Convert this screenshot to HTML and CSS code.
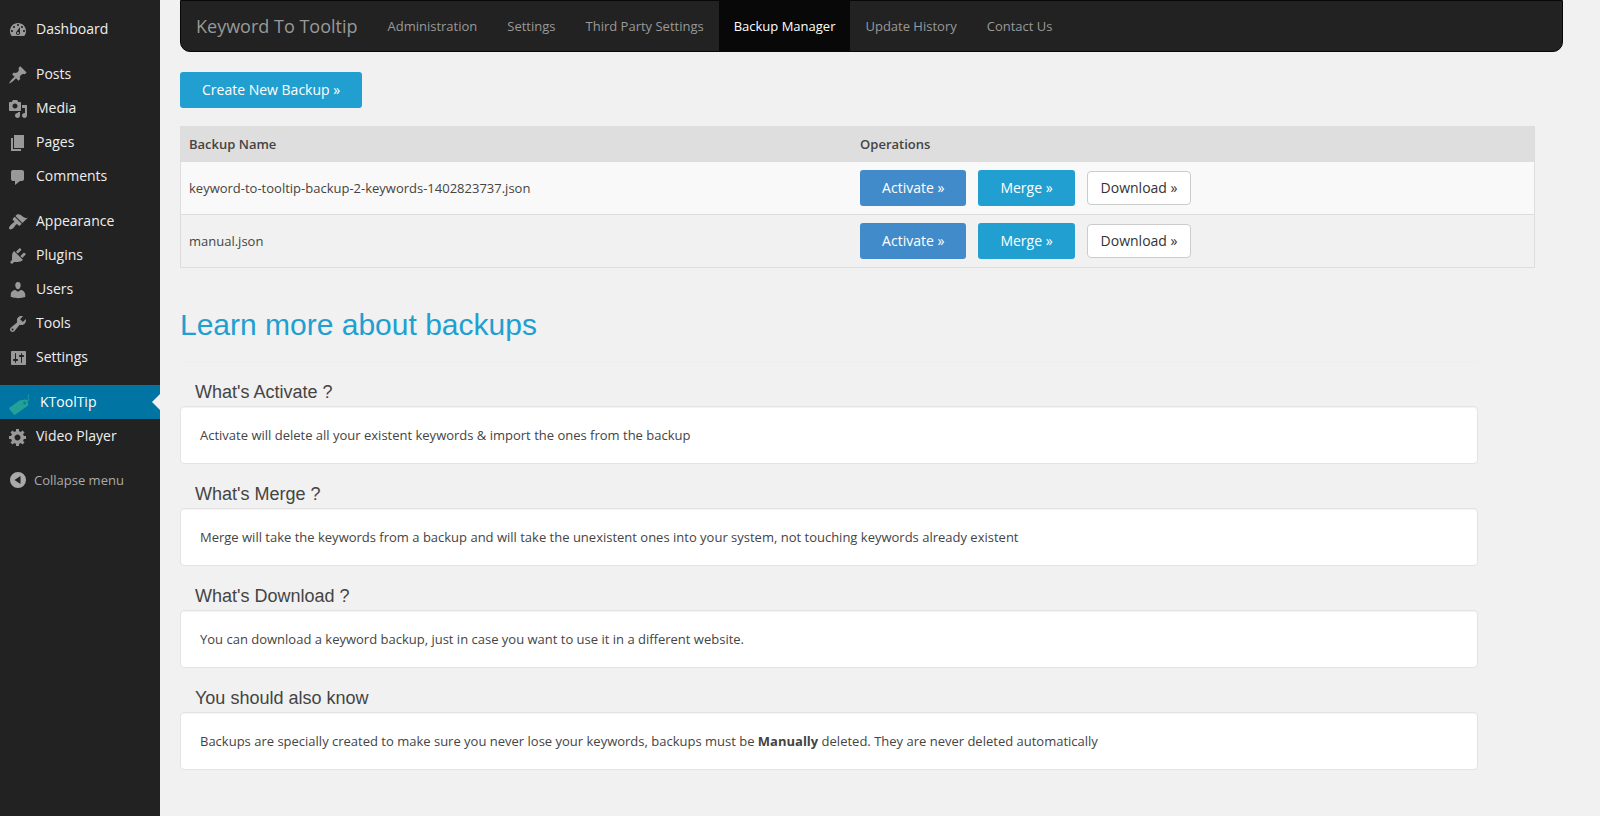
FILE: index.html
```html
<!DOCTYPE html>
<html lang="en">
<head>
<meta charset="utf-8">
<title>Backup Manager</title>
<link rel="stylesheet" href="styles.css">
</head>
<body>
<div class="layout">
  <nav class="sidebar" aria-label="Admin menu">
    <ul class="menu">
      <li><a class="menu-link" href="#"><svg class="icon" viewBox="0 0 20 20"><path fill-rule="evenodd" d="M3.76 16h12.48c1.1-1.37 1.76-3.11 1.76-5 0-4.42-3.58-8-8-8s-8 3.58-8 8c0 1.89.66 3.63 1.76 5zM10 4c.55 0 1 .45 1 1s-.45 1-1 1-1-.45-1-1 .45-1 1-1zM6 6c.55 0 1 .45 1 1s-.45 1-1 1-1-.45-1-1 .45-1 1-1zm8 0c.55 0 1 .45 1 1s-.45 1-1 1-1-.45-1-1 .45-1 1-1zm-5.37 5.55L12 7v6c0 1.1-.9 2-2 2s-2-.9-2-2c0-.57.24-1.08.63-1.45zM4 10c.55 0 1 .45 1 1s-.45 1-1 1-1-.45-1-1 .45-1 1-1zm12 0c.55 0 1 .45 1 1s-.45 1-1 1-1-.45-1-1 .45-1 1-1zm-5 3c0-.55-.45-1-1-1s-1 .45-1 1 .45 1 1 1 1-.45 1-1z"/></svg>Dashboard</a></li>
    </ul>
    <ul class="menu">
      <li><a class="menu-link" href="#"><svg class="icon" viewBox="0 0 20 20"><path d="M10.44 3.02l1.82-1.82 6.36 6.35-1.83 1.82c-1.05-.68-2.48-.57-3.41.36l-.75.75c-.92.93-1.04 2.35-.35 3.41l-1.83 1.82-2.41-2.41-2.8 2.79c-.42.42-3.38 2.71-3.8 2.29s1.86-3.39 2.28-3.81l2.79-2.79L4.1 9.36l1.83-1.82c1.05.69 2.48.57 3.4-.36l.75-.75c.93-.92 1.05-2.35.36-3.41z"/></svg>Posts</a></li>
      <li><a class="menu-link" href="#"><svg class="icon" viewBox="0 0 20 20"><path fill-rule="evenodd" d="M13 11V4c0-.55-.45-1-1-1h-1.67L9 1H5L3.67 3H2c-.55 0-1 .45-1 1v7c0 .55.45 1 1 1h10c.55 0 1-.45 1-1zM7 4.5c1.38 0 2.5 1.12 2.5 2.5S8.38 9.5 7 9.5 4.5 8.38 4.5 7 5.62 4.5 7 4.5zM14 6h5v10.5c0 1.38-1.12 2.5-2.5 2.5S14 17.88 14 16.5s1.12-2.5 2.5-2.5c.17 0 .34.02.5.05V9h-3V6zm-4 8.05V13h2v3.5c0 1.38-1.12 2.5-2.5 2.5S7 17.88 7 16.5 8.12 14 9.5 14c.17 0 .34.02.5.05z"/></svg>Media</a></li>
      <li><a class="menu-link" href="#"><svg class="icon" viewBox="0 0 20 20"><path d="M6 15V2h10v13H6zm-1 1h8v2H3V5h2v11z"/></svg>Pages</a></li>
      <li><a class="menu-link" href="#"><svg class="icon" viewBox="0 0 20 20"><path d="M5 3h9c1.1 0 2 .9 2 2v7c0 1.1-.9 2-2 2h-2l-5 4v-4H5c-1.1 0-2-.9-2-2V5c0-1.1.9-2 2-2z"/></svg>Comments</a></li>
    </ul>
    <ul class="menu">
      <li><a class="menu-link" href="#"><svg class="icon" viewBox="0 0 20 20"><path d="M14.48 11.06L7.41 3.99l1.5-1.5c.5-.56 2.3-.47 3.51.32 1.21.8 1.43 1.28 2.91 2.1 1.18.64 2.45 1.26 4.45.85zm-.71.71L6.7 4.7 4.93 6.47c-.39.39-.39 1.02 0 1.41l1.06 1.06c.39.39.39 1.03 0 1.42-.6.6-1.43 1.11-2.21 1.69-.35.26-.7.53-1.01.84C1.43 14.23.4 16.08 1.4 17.07c.99 1 2.84-.03 4.18-1.36.31-.31.58-.66.85-1.02.57-.78 1.08-1.61 1.69-2.21.39-.39 1.02-.39 1.41 0l1.06 1.06c.39.39 1.02.39 1.41 0z"/></svg>Appearance</a></li>
      <li><a class="menu-link" href="#"><svg class="icon" viewBox="0 0 20 20"><path d="M13.11 4.36L9.87 7.6 8 5.73l3.24-3.24c.35-.34 1.05-.2 1.56.32.52.51.66 1.21.31 1.55zm-8 1.77l.91-1.12 9.01 9.01-1.19.84c-.71.71-2.63 1.16-3.82 1.16H6.14L4.9 17.26c-.59.59-1.54.59-2.12 0-.59-.58-.59-1.53 0-2.12l1.24-1.24v-3.88c0-1.13.4-3.19 1.09-3.89zm7.26 3.97l3.24-3.24c.34-.35 1.04-.21 1.55.31.52.51.66 1.21.31 1.55l-3.24 3.25z"/></svg>Plugins</a></li>
      <li><a class="menu-link" href="#"><svg class="icon" viewBox="0 0 20 20"><path d="M10 9.25c-2.27 0-2.73-3.44-2.73-3.44C7 4.02 7.82 2 9.97 2c2.16 0 2.98 2.02 2.71 3.81 0 0-.41 3.44-2.68 3.44zm0 2.57L12.72 10c2.39 0 4.52 2.33 4.52 4.53v2.49s-3.65 1.13-7.24 1.13c-3.65 0-7.24-1.13-7.24-1.13v-2.49c0-2.25 1.94-4.48 4.47-4.48z"/></svg>Users</a></li>
      <li><a class="menu-link" href="#"><svg class="icon" viewBox="0 0 20 20"><path fill-rule="evenodd" d="M16.68 9.77c-1.34 1.34-3.3 1.67-4.95.99l-5.41 6.52c-.99.99-2.59.99-3.58 0s-.99-2.59 0-3.57l6.52-5.42c-.68-1.65-.35-3.61.99-4.95 1.28-1.28 3.12-1.62 4.72-1.06l-2.89 2.89 2.82 2.82 2.86-2.87c.53 1.58.18 3.39-1.08 4.65zM3.81 16.21c.4.39 1.04.39 1.43 0 .4-.4.4-1.04 0-1.43-.39-.4-1.03-.4-1.43 0-.39.39-.39 1.03 0 1.43z"/></svg>Tools</a></li>
      <li><a class="menu-link" href="#"><svg class="icon" viewBox="0 0 20 20"><path fill-rule="evenodd" d="M18 16V4c0-.55-.45-1-1-1H4c-.55 0-1 .45-1 1v12c0 .55.45 1 1 1h13c.55 0 1-.45 1-1zM8 11h1c.55 0 1 .45 1 1s-.45 1-1 1H8v1.5c0 .28-.22.5-.5.5s-.5-.22-.5-.5V13H6c-.55 0-1-.45-1-1s.45-1 1-1h1V5.5c0-.28.22-.5.5-.5s.5.22.5.5V11zm5-2h-1c-.55 0-1-.45-1-1s.45-1 1-1h1V5.5c0-.28.22-.5.5-.5s.5.22.5.5V7h1c.55 0 1 .45 1 1s-.45 1-1 1h-1v5.5c0 .28-.22.5-.5.5s-.5-.22-.5-.5V9z"/></svg>Settings</a></li>
    </ul>
    <ul class="menu">
      <li><a class="menu-link menu-link-current" href="#" aria-current="page"><svg class="icon icon-tag" viewBox="0 0 24 24"><path fill-rule="evenodd" d="M2 16.200L11.500 9.600Q12.500 9 13.600 8.900L17.600 8.600Q18.800 8.600 19.300 9.600L20.200 13Q20.400 14.200 19.400 15L7.600 23.500Q6.400 24.300 5.500 23.200L1.300 18Q.700 17 2 16.200ZM16.700 10.600a1.300 1.300 0 1 0 .1 2.600 1.300 1.300 0 0 0-.1-2.600z"/><path class="tag-string" d="M16.800 12C18.500 8 22 11.500 20.400 7.500C19.800 5.500 21 5.500 20.700 3.300"/></svg>KToolTip</a></li>
      <li><a class="menu-link" href="#"><svg class="icon" viewBox="0 0 20 20"><path fill-rule="evenodd" d="M18 12h-2.180c-.17.7-.44 1.350-.81 1.930l1.540 1.540-2.100 2.100-1.540-1.540c-.58.36-1.230.63-1.910.79V19H8v-2.180c-.68-.16-1.330-.43-1.910-.79l-1.540 1.540-2.120-2.120 1.540-1.540c-.36-.58-.63-1.230-.79-1.910H1V9.030h2.170c.16-.7.44-1.350.8-1.940L2.430 5.550l2.100-2.100 1.540 1.540c.58-.37 1.240-.64 1.930-.81V2h3v2.180c.68.16 1.330.43 1.910.79l1.540-1.540 2.120 2.120-1.540 1.540c.36.59.64 1.240.8 1.940H18V12zm-8.500 1.500c1.660 0 3-1.340 3-3s-1.340-3-3-3-3 1.340-3 3 1.340 3 3 3z"/></svg>Video Player</a></li>
    </ul>
    <button class="collapse" type="button"><svg class="icon" viewBox="0 0 20 20"><path fill-rule="evenodd" d="M10 2a8 8 0 1 0 0 16 8 8 0 0 0 0-16zM12.500 6v8L6.500 10z"/></svg>Collapse menu</button>
  </nav>

  <main class="content">
    <header class="navbar">
      <a class="brand" href="#">Keyword To Tooltip</a>
      <nav class="tabs" aria-label="Plugin sections">
        <a class="tab" href="#">Administration</a>
        <a class="tab" href="#">Settings</a>
        <a class="tab" href="#">Third Party Settings</a>
        <a class="tab tab-active" href="#" aria-current="page">Backup Manager</a>
        <a class="tab" href="#">Update History</a>
        <a class="tab" href="#">Contact Us</a>
      </nav>
    </header>

    <button class="btn btn-info" type="button">Create New Backup »</button>

    <table class="backups">
      <thead>
        <tr><th scope="col">Backup Name</th><th scope="col">Operations</th></tr>
      </thead>
      <tbody>
        <tr>
          <td>keyword-to-tooltip-backup-2-keywords-1402823737.json</td>
          <td><div class="operations"><button class="btn btn-primary" type="button">Activate »</button><button class="btn btn-info" type="button">Merge »</button><button class="btn btn-default" type="button">Download »</button></div></td>
        </tr>
        <tr>
          <td>manual.json</td>
          <td><div class="operations"><button class="btn btn-primary" type="button">Activate »</button><button class="btn btn-info" type="button">Merge »</button><button class="btn btn-default" type="button">Download »</button></div></td>
        </tr>
      </tbody>
    </table>

    <section class="help">
      <h1 class="help-title">Learn more about backups</h1>
      <h2 class="topic">What's Activate ?</h2>
      <p class="well">Activate will delete all your existent keywords &amp; import the ones from the backup</p>
      <h2 class="topic">What's Merge ?</h2>
      <p class="well">Merge will take the keywords from a backup and will take the unexistent ones into your system, not touching keywords already existent</p>
      <h2 class="topic">What's Download ?</h2>
      <p class="well">You can download a keyword backup, just in case you want to use it in a different website.</p>
      <h2 class="topic">You should also know</h2>
      <p class="well">Backups are specially created to make sure you never lose your keywords, backups must be <strong>Manually</strong> deleted. They are never deleted automatically</p>
    </section>
  </main>
</div>
</body>
</html>
```
FILE: styles.css
```css
* {
  box-sizing: border-box;
}

body {
  margin: 0;
  background: #f1f1f1;
  color: #444;
  font: 13px/18px "Open Sans", "Noto Sans", sans-serif;
}

a {
  text-decoration: none;
}

button {
  font-family: inherit;
  cursor: pointer;
}

.layout {
  display: flex;
  min-height: 100vh;
}

/* Sidebar */
.sidebar {
  flex: 0 0 160px;
  padding-top: 12px;
  background: #222;
}

.menu {
  margin: 0 0 11px;
  padding: 0;
  list-style: none;
}

.menu:last-of-type {
  margin-bottom: 10px;
}

.menu-link {
  display: flex;
  align-items: center;
  gap: 8px;
  position: relative;
  height: 34px;
  padding: 0 8px;
  color: #eee;
  font-size: 14px;
  line-height: 18px;
}

.icon {
  flex: none;
  width: 20px;
  height: 20px;
  margin-top: 2px;
  fill: #999;
}

.menu-link-current {
  background: #0074a2;
  color: #fff;
}

.menu-link-current::after {
  content: "";
  position: absolute;
  top: 9px;
  right: 0;
  border: 8px solid transparent;
  border-left: 0;
  border-right-color: #f1f1f1;
}

.icon-tag {
  width: 24px;
  height: 24px;
  fill: #23a097;
}

.tag-string {
  fill: none;
  stroke: #23a097;
  stroke-width: 1;
}

.collapse {
  display: flex;
  align-items: center;
  gap: 6px;
  height: 34px;
  padding: 0 8px;
  border: 0;
  background: none;
  color: #aaa;
  font-size: 13px;
  line-height: 18px;
}

.collapse .icon {
  margin-top: 0;
  fill: #aaa;
}

/* Main column */
.content {
  flex: 1;
  min-width: 0;
  padding: 0 37px 40px 20px;
}

.navbar {
  display: flex;
  margin-bottom: 20px;
  border: 1px solid #080808;
  border-radius: 0 0 10px 10px;
  background: #222;
}

.brand,
.tab {
  padding: 15px;
  color: #999;
  line-height: 20px;
}

.brand {
  font-size: 18px;
}

.tabs {
  display: flex;
}

.tab-active {
  background: #080808;
  color: #fff;
}

.btn {
  height: 36px;
  padding: 0 22px;
  border: 0;
  border-radius: 3px;
  color: #fff;
  font-size: 14px;
  line-height: 20px;
}

.btn-info {
  background: #219fd1;
}

.btn-primary {
  background: #428bca;
}

.btn-default {
  height: 34px;
  padding: 0 13px;
  border: 1px solid #ccc;
  border-radius: 4px;
  background: #fff;
  color: #333;
}

.backups {
  width: calc(100% - 28px);
  margin-top: 18px;
  border: 1px solid #ddd;
  border-spacing: 0;
  table-layout: fixed;
}

.backups th,
.backups td {
  padding: 8px;
  text-align: left;
  vertical-align: baseline;
}

.backups th:first-child {
  width: 49.6%;
}

.backups th {
  background: #dedede;
  font-weight: 600;
}

.backups td {
  border-top: 1px solid #ddd;
}

.backups tbody tr:first-child {
  background: #f9f9f9;
}

.operations {
  display: flex;
  align-items: center;
  gap: 12px;
}

.help {
  margin-right: 85px;
}

.help-title {
  margin: 40px 0 0;
  padding-bottom: 19px;
  border-bottom: 1px solid #eee;
  color: #219fd1;
  font: 30px/34px "Liberation Sans", Arial, sans-serif;
}

.topic {
  margin: 20px 15px 4px;
  font: 18px/20px "Liberation Sans", Arial, sans-serif;
}

.well {
  margin: 0;
  padding: 19px;
  border: 1px solid #e3e3e3;
  border-radius: 4px;
  background: #fff;
  box-shadow: inset 0 1px 1px rgba(0, 0, 0, 0.05);
}
```
